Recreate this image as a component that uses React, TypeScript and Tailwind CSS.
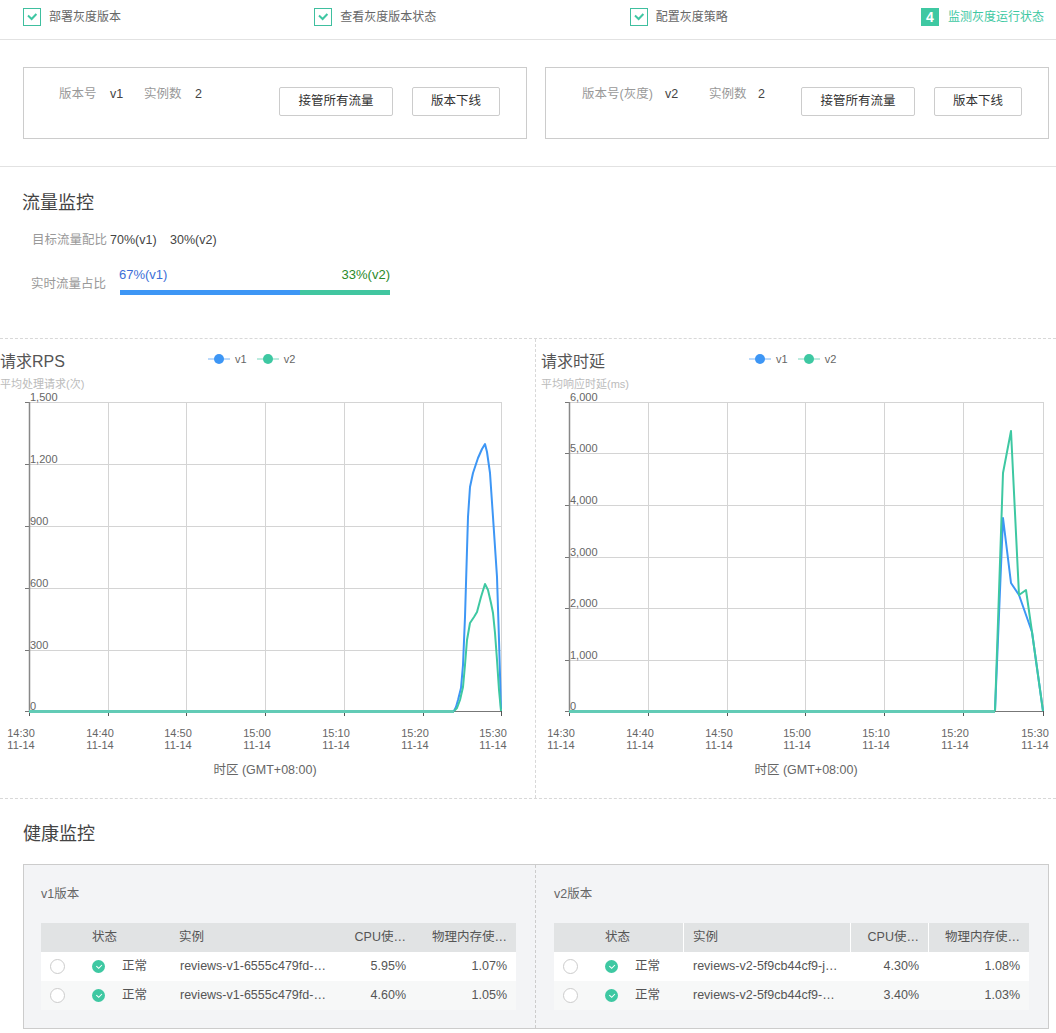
const blue = '#3d96f5'
const green = '#3ec8a2'

function Check({ className, width = 2 }: { className: string; width?: number }) {
  return (
    <svg viewBox="0 0 12 12" className={className} fill="none" stroke="currentColor" strokeWidth={width}>
      <path d="M2 4.6 L5.6 8 L10.4 3" />
    </svg>
  )
}

function Step({ text }: { text: string }) {
  return (
    <div className="flex items-center gap-2">
      <span className="w-[18px] h-[18px] border border-[#3fbf9f] flex items-start justify-center pt-[2px] text-[#3fc7a3]">
        <Check className="w-3 h-3" />
      </span>
      <span className="text-xs text-[#666]">{text}</span>
    </div>
  )
}

function VersionCard(p: { label: string; labelW: string; version: string; gap: string }) {
  return (
    <div className="w-[504px] h-[72px] border border-[#ccc] flex justify-between pr-[26px] pt-[19px]">
      <div className="flex items-start text-[12.5px] leading-[18px] pl-[35px] -mt-[2px]">
        <span className={`text-[#999] ${p.labelW}`}>{p.label}</span>
        <span className="text-[#444] w-[34px]">{p.version}</span>
        <span className={`text-[#999] ${p.gap}`}>实例数</span>
        <span className="text-[#444]">2</span>
      </div>
      <div className="flex gap-[19px]">
        <button className="w-[114px] h-[29px] border border-[#ccc] rounded-[2px] text-[12.5px] text-[#333]">接管所有流量</button>
        <button className="w-[88px] h-[29px] border border-[#ccc] rounded-[2px] text-[12.5px] text-[#333]">版本下线</button>
      </div>
    </div>
  )
}

interface ChartProps {
  title: string; subtitle: string; x0: number; width: number
  vx: number[]; hy: number[]; labels: string[]
  v1: string; v2: string; breakX: number; head: string
}

const times = ['14:30', '14:40', '14:50', '15:00', '15:10', '15:20', '15:30']

function Chart({ title, subtitle, x0, width, vx, hy, labels, v1, v2, breakX, head }: ChartProps) {
  const left = vx[0], right = vx[vx.length - 1]
  return (
    <div style={{ width }}>
      <div className={`flex pt-[12px] h-[48px] ${head}`}>
        <div className="w-[208px]">
          <div className="text-base leading-[22px] text-[#555]">{title}</div>
          <div className="text-[11px] leading-[14px] mt-[4px] text-[#bbb] whitespace-nowrap">{subtitle}</div>
        </div>
        <div className="flex items-start gap-[10px] text-[11px] leading-[16px] text-[#666]">
          <Legend color={blue} name="v1" />
          <Legend color={green} name="v2" />
        </div>
      </div>
      <svg viewBox={`${x0} 387 ${width} 410`} width={width} height={410} className="block" fontFamily="Liberation Sans, Noto Sans CJK SC, sans-serif">
        {hy.map((y) => (
          <g key={y}>
            <line x1={left} x2={right} y1={y + 0.5} y2={y + 0.5} stroke="#d4d4d4" />
            <line x1={left - 4} x2={left} y1={y + 0.5} y2={y + 0.5} stroke="#777" />
          </g>
        ))}
        {vx.map((x) => (
          <g key={x}>
            <line x1={x + 0.5} x2={x + 0.5} y1={402} y2={711} stroke="#d4d4d4" />
            <line x1={x + 0.5} x2={x + 0.5} y1={711} y2={716} stroke="#555" />
          </g>
        ))}
        <line x1={left + 0.5} x2={left + 0.5} y1={402} y2={712} stroke="#888" strokeWidth="1.5" />
        <line x1={left} x2={right} y1={711.5} y2={711.5} stroke="#777" />
        <line x1={left} x2={breakX} y1={711.5} y2={711.5} stroke="#62cbb6" strokeWidth="3" />
        <polyline points={`${breakX},711 ${v1}`} fill="none" stroke={blue} strokeWidth="2" strokeLinejoin="round" />
        <polyline points={`${breakX},711 ${v2}`} fill="none" stroke={green} strokeWidth="2" strokeLinejoin="round" />
        {labels.map((l, i) => (
          <text key={l} x={left + 1} y={hy[i] - 1} fontSize="11" fill="#666">{l}</text>
        ))}
        {vx.map((x, i) => (
          <text key={x} x={x - 8} textAnchor="middle" fontSize="11" fill="#666">
            <tspan x={x - 8} y={737}>{times[i]}</tspan>
            <tspan x={x - 8} y={749}>11-14</tspan>
          </text>
        ))}
        <text x={(left + right) / 2} y={774} textAnchor="middle" fontSize="12.5" fill="#666">时区 (GMT+08:00)</text>
      </svg>
    </div>
  )
}

function Legend({ color, name }: { color: string; name: string }) {
  return (
    <div className="flex items-center gap-[5px]">
      <svg width="22" height="16" viewBox="0 0 22 16">
        <line x1="0" x2="22" y1="8" y2="8" stroke={color} strokeOpacity="0.7" />
        <circle cx="11" cy="8" r="5" fill={color} />
      </svg>
      <span>{name}</span>
    </div>
  )
}

const cols = 'grid grid-cols-[42px_87px_167px_78px_101px] items-center'

function Row({ name, cpu, mem, striped }: { name: string; cpu: string; mem: string; striped?: boolean }) {
  return (
    <div className={`${cols} h-[29px] text-[12.5px] text-[#555] ${striped ? 'bg-[#f7f8f8]' : 'bg-white'}`}>
      <span className="ml-[9px] w-[15px] h-[15px] rounded-full border border-[#ccc] bg-white" />
      <div className="flex items-center pl-[9px] gap-[17px]">
        <span className="w-[13px] h-[13px] rounded-full bg-[#3ec8a2] text-white flex items-center justify-center">
          <Check className="w-[8px] h-[8px]" width={1.6} />
        </span>
        <span>正常</span>
      </div>
      <span className="pl-[10px] whitespace-nowrap">{name}</span>
      <span className="pr-[9px] text-right">{cpu}</span>
      <span className="pr-[9px] text-right">{mem}</span>
    </div>
  )
}

function InstanceTable({ title, rows, seps }: { title: string; rows: { name: string; cpu: string; mem: string }[]; seps?: boolean }) {
  const sep = seps ? 'border-l border-white h-full flex items-center' : 'h-full flex items-center'
  return (
    <div className="w-[475px]">
      <div className="text-[12.5px] leading-[18px] text-[#666]">{title}</div>
      <div className={`${cols} h-[29px] mt-[20px] bg-[#e1e3e4] text-[12.5px] text-[#555]`}>
        <span />
        <span className="pl-[9px]">状态</span>
        <span className={`${sep} pl-[9px]`}>实例</span>
        <span className={`${sep} justify-end pr-[9px]`}>CPU使…</span>
        <span className={`${sep} justify-end pr-[9px]`}>物理内存使…</span>
      </div>
      {rows.map((r, i) => (
        <Row key={i} {...r} striped={i === 1} />
      ))}
    </div>
  )
}

export default function App() {
  return (
    <div className="w-[1056px] bg-white overflow-hidden font-['Liberation_Sans','Noto_Sans_CJK_SC',sans-serif]">
      <div className="h-[40px] border-b border-[#e2e2e2] flex items-start justify-between pt-[8px] pl-[23px] pr-[12px]">
        <Step text="部署灰度版本" />
        <Step text="查看灰度版本状态" />
        <Step text="配置灰度策略" />
        <div className="flex items-center gap-[9px]">
          <span className="w-[18px] h-[18px] bg-[#3ec8a2] text-white text-sm font-bold flex items-center justify-center">4</span>
          <span className="text-xs text-[#3ec8a2]">监测灰度运行状态</span>
        </div>
      </div>

      <div className="h-[127px] border-b border-[#e2e2e2] flex gap-[18px] pl-[23px] pt-[27px]">
        <VersionCard label="版本号" labelW="w-[51px]" version="v1" gap="w-[51px]" />
        <VersionCard label="版本号(灰度)" labelW="w-[83px] ml-px" version="v2" gap="w-[49px] ml-[10px]" />
      </div>

      <div className="h-[171px] pl-[23px] pt-[24px]">
        <h2 className="text-lg leading-[24px] text-[#444] -ml-px">流量监控</h2>
        <div className="flex mt-[16px] pl-[9px] text-[12.5px] leading-[18px]">
          <span className="w-[78px] text-[#999]">目标流量配比</span>
          <span className="w-[60px] text-[#444]">70%(v1)</span>
          <span className="text-[#444]">30%(v2)</span>
        </div>
        <div className="flex mt-[16px] pl-[8px]">
          <span className="w-[89px] mt-[10px] text-[12.5px] leading-[18px] text-[#999]">实时流量占比</span>
          <div className="w-[270px]">
            <div className="flex justify-between text-[13px] leading-[18px] -ml-px mt-px">
              <span className="text-[#3c6fd8]">67%(v1)</span>
              <span className="text-[#2a8a2a]">33%(v2)</span>
            </div>
            <div className="flex h-[5px] mt-[6px]">
              <div className="w-[180px] bg-[#3d96f5]" />
              <div className="w-[90px] bg-[#41c6a0]" />
            </div>
          </div>
        </div>
      </div>

      <div className="flex h-[461px] border-y border-dashed border-[#d8d8d8]">
        <div className="border-r border-dashed border-[#d8d8d8]">
          <Chart
            title="请求RPS" subtitle="平均处理请求(次)" x0={0} width={535} head=""
            vx={[29, 108, 186, 265, 344, 423, 501]} hy={[402, 464, 526, 588, 650, 711]}
            labels={['1,500', '1,200', '900', '600', '300', '0']} breakX={454}
            v1="456,707 458,700 461,688 463,665 465,617 467,550 468,517 470,487 473,473 478,458 482,449 485,444 487,452 490,473 493,517 497,577 499,640 501,709"
            v2="457,708 460,700 463,687 465,665 467,640 470,623 474,617 477,612 481,597 485,584 488,590 491,603 493,613 495,633 497,660 499,690 501,711"
          />
        </div>
        <Chart
          title="请求时延" subtitle="平均响应时延(ms)" x0={536} width={520} head="pl-[5px]"
          vx={[569, 648, 727, 805, 884, 963, 1043]} hy={[402, 453, 505, 557, 608, 660, 711]}
          labels={['6,000', '5,000', '4,000', '3,000', '2,000', '1,000', '0']} breakX={995}
          v1="1003,518 1011,583 1019,595 1032,632 1043,711"
          v2="1003,473 1011,431 1019,595 1026,590 1032,632 1043,711"
        />
      </div>

      <div className="pl-[23px] pt-[23px]">
        <h2 className="text-lg leading-[24px] text-[#444]">健康监控</h2>
        <div className="w-[1026px] h-[165px] mt-[18px] border border-[#ccc] bg-[#f3f4f6] flex">
          <div className="w-[512px] border-r border-dashed border-[#ccc] pl-[17px] pt-[20px]">
            <InstanceTable
              title="v1版本"
              rows={[
                { name: 'reviews-v1-6555c479fd-…', cpu: '5.95%', mem: '1.07%' },
                { name: 'reviews-v1-6555c479fd-…', cpu: '4.60%', mem: '1.05%' },
              ]}
            />
          </div>
          <div className="pl-[18px] pt-[20px]">
            <InstanceTable
              title="v2版本" seps
              rows={[
                { name: 'reviews-v2-5f9cb44cf9-j…', cpu: '4.30%', mem: '1.08%' },
                { name: 'reviews-v2-5f9cb44cf9-…', cpu: '3.40%', mem: '1.03%' },
              ]}
            />
          </div>
        </div>
      </div>
    </div>
  )
}
